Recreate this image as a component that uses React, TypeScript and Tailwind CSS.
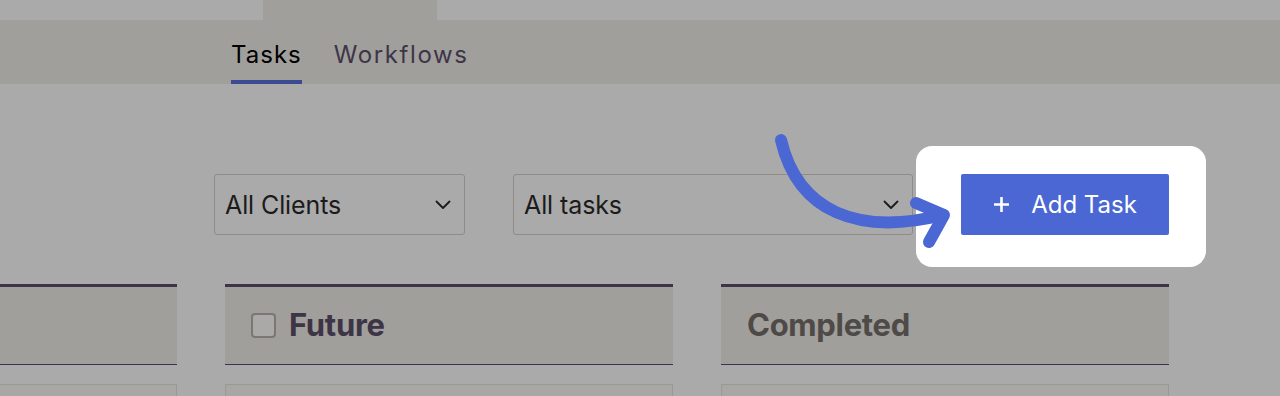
import React from "react";

const font = { fontFamily: "Inter, 'Noto Sans', sans-serif" };

function Chevron() {
  return (
    <svg width="16" height="10" viewBox="0 0 16 10" fill="none">
      <path d="M1.5 1.5 L8 8 L14.5 1.5" stroke="#1c1a1a" strokeWidth="1.8" strokeLinecap="round" strokeLinejoin="round" />
    </svg>
  );
}

function Column({ title, checkbox, dim }: { title: string; checkbox?: boolean; dim?: boolean }) {
  return (
    <div className="w-[448px] shrink-0 flex flex-col">
      <div className="h-[81px] border-t-[3px] border-b border-[#3d3547] bg-[#a09f9b] flex items-center px-[26px] gap-[13px]">
        {checkbox && <div className="w-[25px] h-[25px] rounded-[4px] border-2 border-[#7a7775] bg-[#aaa9a8]" />}
        {title && (
          <span className={`text-[31px] font-bold tracking-[-0.3px] ${dim ? "text-[#4e4a47]" : "text-[#3d3446]"}`}>{title}</span>
        )}
      </div>
      <div className="mt-[19px] h-[40px] border border-[#9c9893] bg-[#a8a7a6]" />
    </div>
  );
}

export default function App() {
  return (
    <div className="relative w-[1280px] h-[396px] overflow-hidden bg-[#aaaaaa]" style={font}>
      <div className="flex h-5">
        <div className="w-[263px]" />
        <div className="w-[174px] bg-[#a09f9b]" />
      </div>
      <div className="h-16 bg-[#a09f9b] flex items-end pl-[231px] gap-[32px]">
        <div className="flex flex-col items-stretch">
          <span className="text-[24px] leading-none text-black tracking-[1px] mb-[13px]">Tasks</span>
          <div className="h-1 bg-[#3b4a91]" />
        </div>
        <span className="text-[24px] leading-none text-[#3d3547] tracking-[1.6px] mb-[17px]">Workflows</span>
      </div>
      <div className="flex items-start pl-[214px] mt-[62px]">
        <div className="mt-[28px] w-[251px] h-[61px] rounded-[3px] border border-[#8f8b86] flex items-center justify-between pl-[10px] pr-[13px]">
          <span className="text-[25px] text-[#1c1a1a] tracking-[-0.1px] mt-[3px]">All Clients</span>
          <Chevron />
        </div>
        <div className="ml-12 mt-[28px] w-[400px] h-[61px] rounded-[3px] border border-[#8f8b86] flex items-center justify-between pl-[10px] pr-[13px]">
          <span className="text-[25px] text-[#1c1a1a] tracking-[-0.1px] mt-[3px]">All tasks</span>
          <Chevron />
        </div>
        <div className="ml-[3px] bg-white rounded-[16px] pt-[28px] pb-[32px] pl-[45px] pr-[37px]">
          <button className="w-[208px] h-[61px] rounded-[2px] bg-[#4a67d3] text-white flex items-center justify-center gap-[21px]">
            <svg width="17" height="17" viewBox="0 0 17 17">
              <path d="M8.5 1 V16 M1 8.5 H16" stroke="white" strokeWidth="2.6" />
            </svg>
            <span className="text-[24px] tracking-[0px]">Add Task</span>
          </button>
        </div>
      </div>
      <div className="flex gap-12 ml-[-271px] mt-[17px]">
        <Column title="" />
        <Column title="Future" checkbox />
        <Column title="Completed" dim />
      </div>
      <svg className="absolute left-0 top-0 pointer-events-none" width="1280" height="396">
        <path d="M781 140 C 798 212, 858 236, 943 215" stroke="#4a67d3" strokeWidth="12" fill="none" strokeLinecap="round" />
        <path d="M916 203 L944 215 L929 242" stroke="#4a67d3" strokeWidth="12" fill="none" strokeLinecap="round" strokeLinejoin="round" />
      </svg>
    </div>
  );
}
